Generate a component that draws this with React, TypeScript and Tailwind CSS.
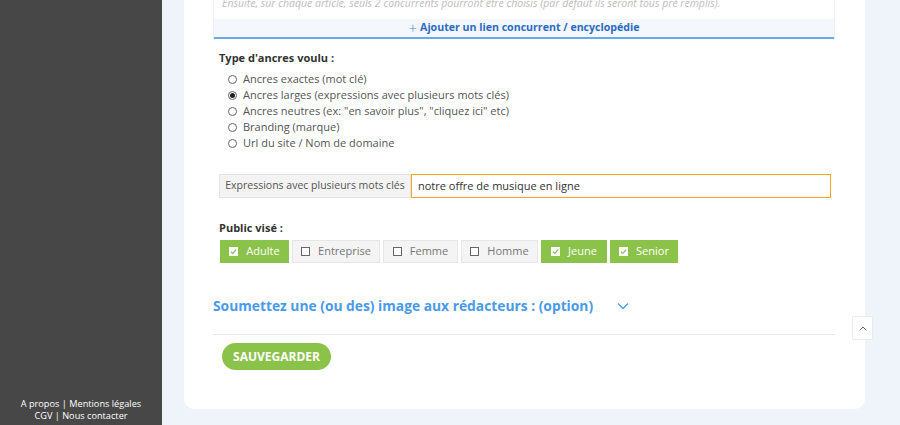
import React from "react";

const font = { fontFamily: '"Open Sans", "Liberation Sans", sans-serif' };

function Radio({ checked, label }: { checked?: boolean; label: string }) {
  return (
    <div className="flex items-center h-[16px]">
      <span className="w-[9px] h-[9px] rounded-full border border-[#666] flex items-center justify-center mr-[6px] ml-[9px]">
        {checked && <span className="w-[5px] h-[5px] rounded-full bg-[#222]" />}
      </span>
      <span className="text-[11px] text-[#555]">{label}</span>
    </div>
  );
}

function Chip({ on, label, w }: { on?: boolean; label: string; w: string }) {
  return (
    <div
      className={
        "h-[23px] flex items-center justify-center gap-[8px] text-[11px] " +
        w +
        (on
          ? " bg-[#8bc34a] text-white"
          : " bg-[#f4f4f4] border border-[#e6e6e6] text-[#777]")
      }
    >
      {on ? (
        <span className="w-[9px] h-[9px] bg-white flex items-center justify-center">
          <svg width="7" height="7" viewBox="0 0 8 8">
            <path d="M1 4.2 L3.2 6.2 L7 1.8" stroke="#8bc34a" strokeWidth="1.4" fill="none" />
          </svg>
        </span>
      ) : (
        <span className="w-[9px] h-[9px] border border-[#666] bg-white" />
      )}
      <span>{label}</span>
    </div>
  );
}

export default function App() {
  return (
    <div className="w-[900px] h-[425px] flex overflow-hidden" style={font}>
      <aside className="w-[162px] shrink-0 bg-[#474747] flex flex-col justify-end items-center pb-[3px] text-[9.2px] text-white leading-[12px]">
        <div>A propos | Mentions légales</div>
        <div>CGV | Nous contacter</div>
      </aside>
      <main className="flex-1 bg-[#eff4fb] pl-[22px] pr-[35px] relative">
        <div className="bg-white rounded-b-[10px] h-[417px] mt-[-8px] px-[29px] pr-[30px] flow-root">
          <div className="border-x border-[#edf1f7]">
            <div className="h-[27px] flex items-center pb-[4px] pl-[8px] text-[10.5px] italic text-[#bdbdbd]">
              Ensuite, sur chaque article, seuls 2 concurrents pourront être choisis (par défaut ils seront tous pré remplis).
            </div>
            <div className="h-[18px] bg-[#f4f7fc] flex items-center justify-center text-[10.6px] font-bold text-[#2b6cc4]">
              <span className="text-[15px] font-light mr-[3px] text-[#5a8ad0] leading-none">+</span>
              Ajouter un lien concurrent / encyclopédie
            </div>
            <div className="h-[2px] bg-[#6aa9ec]" />
          </div>

          <div className="pl-[6px] pt-[11px]">
            <div className="text-[11px] font-bold text-[#333] h-[16px] flex items-center">Type d'ancres voulu :</div>
            <div className="pt-[5px]">
              <Radio label="Ancres exactes (mot clé)" />
              <Radio checked label="Ancres larges (expressions avec plusieurs mots clés)" />
              <Radio label={'Ancres neutres (ex: "en savoir plus", "cliquez ici" etc)'} />
              <Radio label="Branding (marque)" />
              <Radio label="Url du site / Nom de domaine" />
            </div>

            <div className="flex h-[24px] mt-[23px] mr-[4px]">
              <div className="w-[192px] bg-[#f3f3f3] border border-[#e4e4e4] flex items-center justify-center text-[10.5px] text-[#555]">
                Expressions avec plusieurs mots clés
              </div>
              <div className="flex-1 border border-[#f5a623] flex items-center pl-[6px] text-[11px] text-[#333]">
                notre offre de musique en ligne
              </div>
            </div>

            <div className="text-[11px] font-bold text-[#333] h-[16px] flex items-center mt-[22px]">Public visé :</div>
            <div className="flex gap-[3px] mt-[4px] pl-[1px]">
              <Chip on label="Adulte" w="w-[69px]" />
              <Chip label="Entreprise" w="w-[88px]" />
              <Chip label="Femme" w="w-[75px]" />
              <Chip label="Homme" w="w-[77px]" />
              <Chip on label="Jeune" w="w-[66px]" />
              <Chip on label="Senior" w="w-[68px]" />
            </div>
          </div>

          <div className="flex items-center h-[30px] mt-[28px] text-[13.8px] font-bold text-[#4a9ae8]">
            <span>Soumettez une (ou des) image aux rédacteurs : (option)</span>
            <svg className="ml-[24px]" width="12" height="8" viewBox="0 0 12 8">
              <path d="M1 1.5 L6 6.5 L11 1.5" stroke="#4a9ae8" strokeWidth="1.3" fill="none" />
            </svg>
          </div>
          <div className="h-px bg-[#e8e8e8] mt-[13px]" />
          <button className="mt-[8px] ml-[9px] h-[27px] w-[109px] rounded-full bg-[#8bc34a] text-white text-[12px] font-bold">
            SAUVEGARDER
          </button>
        </div>
        <div className="absolute right-[27px] top-[316px] w-[21px] h-[24px] bg-white border border-[#e8ecf2] rounded-[2px] flex items-center justify-center">
          <svg width="8" height="5" viewBox="0 0 8 5">
            <path d="M0.8 4.3 L4 1 L7.2 4.3" stroke="#666" strokeWidth="1" fill="none" />
          </svg>
        </div>
      </main>
    </div>
  );
}
